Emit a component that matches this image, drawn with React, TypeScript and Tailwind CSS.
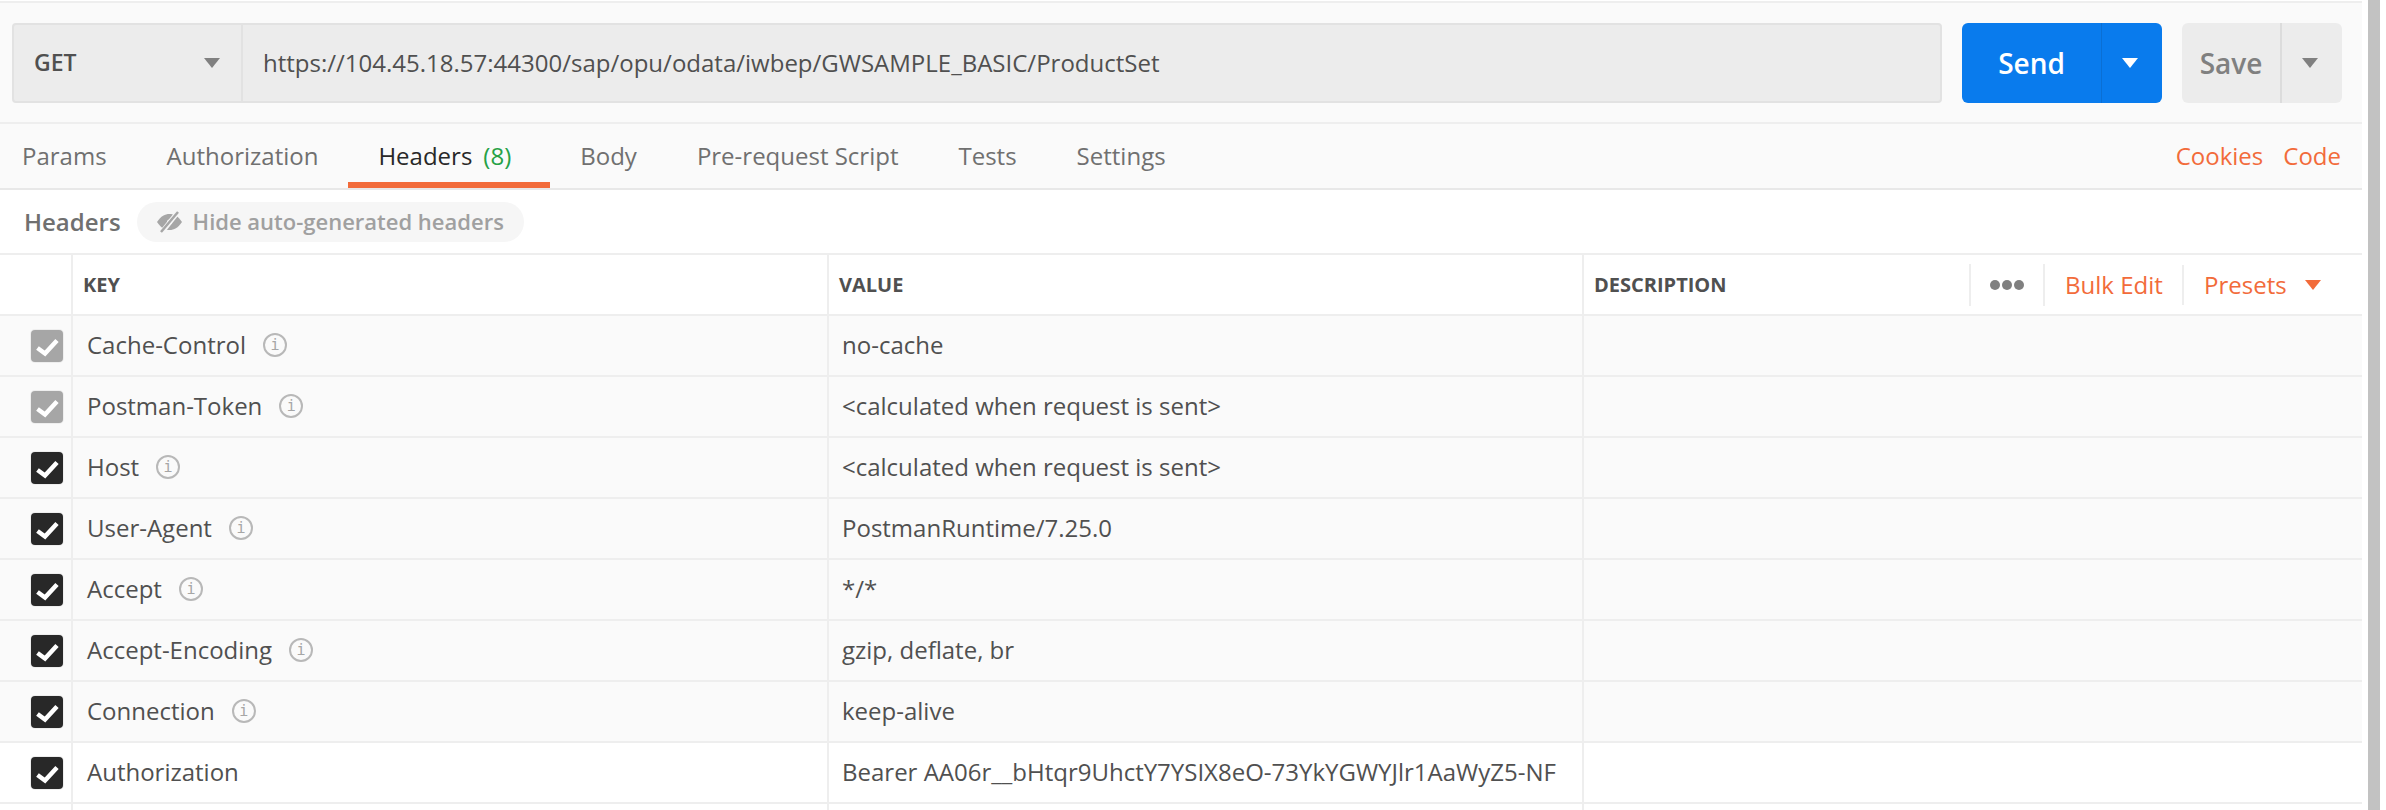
const rows = [
  { key: "Cache-Control", value: "no-cache", info: true, auto: true },
  { key: "Postman-Token", value: "<calculated when request is sent>", info: true, auto: true },
  { key: "Host", value: "<calculated when request is sent>", info: true, auto: false },
  { key: "User-Agent", value: "PostmanRuntime/7.25.0", info: true, auto: false },
  { key: "Accept", value: "*/*", info: true, auto: false },
  { key: "Accept-Encoding", value: "gzip, deflate, br", info: true, auto: false },
  { key: "Connection", value: "keep-alive", info: true, auto: false },
  { key: "Authorization", value: "Bearer AA06r__bHtqr9UhctY7YSIX8eO-73YkYGWYJlr1AaWyZ5-NF", info: false, auto: false },
];

const tabs = ["Params", "Authorization", "Headers", "Body", "Pre-request Script", "Tests", "Settings"];

function Caret({ className }: { className: string }) {
  return (
    <svg width="16" height="10" viewBox="0 0 16 10" className={className}>
      <path d="M0 0h16L8 10z" fill="currentColor" />
    </svg>
  );
}

function InfoIcon() {
  return (
    <span className="flex h-6 w-6 shrink-0 items-center justify-center rounded-full border-2 border-[#b8b8b8] font-['DejaVu_Sans_Mono',monospace] text-[15px] leading-none text-[#a6a6a6]">
      i
    </span>
  );
}

// hide-eye glyph from the "Hide auto-generated headers" pill
function EyeSlash() {
  return (
    <svg width="25" height="22" viewBox="0 0 25 22" className="shrink-0 text-[#a6a6a6]">
      <path d="M0 11C4 5 8 3 12.500 3S21 5 25 11c-4 6-8 8-12.500 8S4 17 0 11z" fill="currentColor" />
      <circle cx="12.500" cy="11" r="2.500" fill="#f6f6f6" />
      <path d="M21 1 5 21" stroke="#f6f6f6" strokeWidth="5" />
      <path d="M21 1 4 21" stroke="currentColor" strokeWidth="2.500" />
    </svg>
  );
}

function CheckBox({ auto }: { auto: boolean }) {
  return (
    <span
      className={
        auto
          ? "block h-8 w-8 rounded ring-1 ring-[#eeeeee] bg-[#a6a6a6]"
          : "block h-8 w-8 rounded ring-1 ring-[#eeeeee] bg-[#282828]"
      }
    >
      <svg width="32" height="32" viewBox="0 0 32 32">
        <path d="M6.500 18 14 23.500 26 10.500" fill="none" stroke="white" strokeWidth="4.500" />
      </svg>
    </span>
  );
}

export default function App() {
  return (
    <div className="flex h-[810px] w-[2386px] overflow-hidden bg-white font-['Open_Sans',sans-serif] text-[#505050]">
      <div className="w-[2362px] shrink-0">
        <div className="mt-[1px] h-[2px] bg-[#eeeeee]" />

        {/* Request bar */}
        <div className="flex h-[121px] items-center border-b-2 border-[#eeeeee] bg-[#fafafa] pl-3">
          <div className="flex h-20 w-[1930px] rounded border-2 border-[#e2e2e2] bg-[#ececec]">
            <div className="flex w-[229px] items-center justify-between border-r-2 border-[#e2e2e2] pl-[20px] pr-[21px]">
              <span className="text-[23px] font-semibold text-[#505050]">GET</span>
              <Caret className="text-[#808080]" />
            </div>
            <div className="flex items-center pl-5 text-[24px] text-[#505050]">
              https://104.45.18.57:44300/sap/opu/odata/iwbep/GWSAMPLE_BASIC/ProductSet
            </div>
          </div>
          <div className="ml-5 flex h-20 w-[200px] rounded-md bg-[#097bed] text-white">
            <div className="flex w-[140px] items-center justify-center border-r border-[#0a6fd4] text-[28px] font-semibold">Send</div>
            <div className="flex flex-1 items-center justify-center pr-1">
              <Caret className="text-white" />
            </div>
          </div>
          <div className="ml-5 flex h-20 w-[160px] rounded-md bg-[#ececec] text-[#808080]">
            <div className="flex w-[100px] items-center justify-center border-r-2 border-[#dcdcdc] text-[28px] font-semibold">Save</div>
            <div className="flex flex-1 items-center justify-center pr-1">
              <Caret className="text-[#808080]" />
            </div>
          </div>
        </div>

        {/* Tabs */}
        <div className="flex h-[66px] items-stretch justify-between border-b-2 border-[#e8e8e8] bg-[#fafafa] pr-[21px] text-[24px]">
          <div className="flex">
            {tabs.map((tab) => (
              <div
                key={tab}
                className={
                  tab === "Headers"
                    ? "flex items-center border-b-[6px] border-[#f26b3a] pl-[30px] pr-[39px] pt-[6px] text-[#282828]"
                    : "flex items-center px-[30px] text-[#707070] first:pl-[22px]"
                }
              >
                {tab}
                {tab === "Headers" && <span className="ml-[11px] text-[#26a146]">(8)</span>}
              </div>
            ))}
          </div>
          <div className="flex items-center gap-5 text-[#f26b3a]">
            <span>Cookies</span>
            <span>Code</span>
          </div>
        </div>

        {/* Headers toolbar */}
        <div className="flex h-[65px] items-center border-b-2 border-[#eeeeee] pl-[24px]">
          <span className="text-[24px] font-semibold text-[#707070]">Headers</span>
          <div className="ml-[16px] flex h-10 w-[387px] items-center gap-[11px] rounded-full bg-[#f6f6f6] pl-5 text-[22px] font-semibold text-[#a0a0a0]">
            <EyeSlash />
            Hide auto-generated headers
          </div>
        </div>

        {/* Table head */}
        <div className="flex h-[61px] items-center border-b-2 border-[#eeeeee] text-[20px] font-bold text-[#505050]">
          <div className="h-full w-[73px] shrink-0 border-r-2 border-[#eeeeee]" />
          <div className="flex h-full w-[756px] shrink-0 items-center border-r-2 border-[#eeeeee] pl-[10px]">KEY</div>
          <div className="flex h-full w-[755px] shrink-0 items-center border-r-2 border-[#eeeeee] pl-[10px]">VALUE</div>
          <div className="flex h-full flex-1 items-center pl-[10px]">
            <span className="w-[375px]">DESCRIPTION</span>
            <div className="flex h-[42px] w-[76px] items-center justify-center border-x-2 border-[#eeeeee]">
              <div className="flex gap-[2px]">
                <i className="h-[10px] w-[10px] rounded-full bg-[#808080]" />
                <i className="h-[10px] w-[10px] rounded-full bg-[#808080]" />
                <i className="h-[10px] w-[10px] rounded-full bg-[#808080]" />
              </div>
            </div>
            <span className="ml-[20px] w-[117px] text-[24px] font-normal text-[#f26b3a]">Bulk Edit</span>
            <div className="h-[40px] border-l-2 border-[#eeeeee]" />
            <span className="ml-[20px] text-[24px] font-normal text-[#f26b3a]">Presets</span>
            <Caret className="ml-[18px] text-[#f26b3a]" />
          </div>
        </div>

        {/* Rows */}
        {rows.map((row) => (
          <div
            key={row.key}
            className={
              row.info
                ? "flex h-[61px] border-b-2 border-[#eeeeee] bg-[#fafafa] text-[24px]"
                : "flex h-[61px] border-b-2 border-[#eeeeee] bg-white text-[24px]"
            }
          >
            <div className="flex w-[73px] shrink-0 items-center justify-end border-r-2 border-[#eeeeee] pr-2">
              <CheckBox auto={row.auto} />
            </div>
            <div className="flex w-[756px] shrink-0 items-center gap-[17px] border-r-2 border-[#eeeeee] pb-[1px] pl-[14px]">
              {row.key}
              {row.info && <InfoIcon />}
            </div>
            <div className="flex w-[755px] shrink-0 items-center border-r-2 border-[#eeeeee] pb-[1px] pl-[13px]">{row.value}</div>
            <div className="flex-1" />
          </div>
        ))}

        {/* Empty row cut off by the window */}
        <div className="flex h-[10px]">
          <div className="w-[73px] shrink-0 border-r-2 border-[#eeeeee]" />
          <div className="w-[756px] shrink-0 border-r-2 border-[#eeeeee]" />
          <div className="w-[755px] shrink-0 border-r-2 border-[#eeeeee]" />
        </div>
      </div>

      {/* Scrollbar */}
      <div className="ml-[6px] w-3 shrink-0 bg-[#c2c2c2]" />
    </div>
  );
}
